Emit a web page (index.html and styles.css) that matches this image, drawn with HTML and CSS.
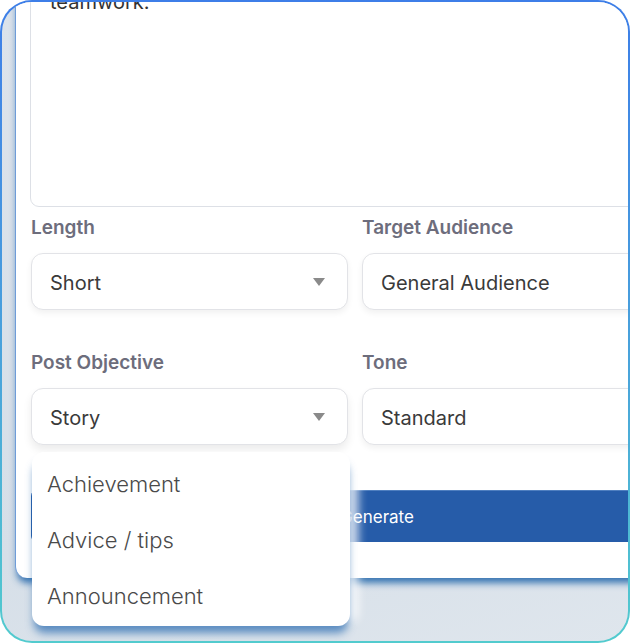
FILE: index.html
```html
<!DOCTYPE html>
<html lang="en">
<head>
    <meta charset="UTF-8">
    <meta name="viewport" content="width=device-width, initial-scale=1.0">
    <title>Post Generator</title>
    <link rel="stylesheet" href="styles.css">
</head>
<body>
    <div class="frame">
        <div class="screen">
            <div class="card">
                <div class="prompt">teamwork.</div>
                <div class="fields">
                    <div class="field">
                        <div class="label">Length</div>
                        <div class="select">Short<span class="caret"></span></div>
                    </div>
                    <div class="field">
                        <div class="label">Target Audience</div>
                        <div class="select">General Audience<span class="caret"></span></div>
                    </div>
                    <div class="field field-open">
                        <div class="label">Post Objective</div>
                        <div class="select">Story<span class="caret"></span></div>
                        <ul class="menu">
                            <li>Achievement</li>
                            <li>Advice / tips</li>
                            <li>Announcement</li>
                        </ul>
                    </div>
                    <div class="field">
                        <div class="label">Tone</div>
                        <div class="select">Standard<span class="caret"></span></div>
                    </div>
                </div>
                <button class="generate">Generate</button>
            </div>
        </div>
    </div>
</body>
</html>
```

FILE: styles.css
```css
*{
    padding: 0;
    margin: 0;
    box-sizing: border-box;
}
body{
    background: #fff;
    font-family: Inter, "Noto Sans", sans-serif;
}

/* rounded window with the blue to teal outline */
.frame{
    width: 630px;
    height: 643px;
    padding: 2px;
    border-radius: 32px;
    background: linear-gradient(180deg, #3d7ee8 0%, #4aa6da 60%, #52cbce 100%);
}
.screen{
    height: 100%;
    border-radius: 30px;
    overflow: hidden;
    background: linear-gradient(165deg, #dbe3eb 0%, #d6dfe8 70%, #dfe6ed 100%);
}

.card{
    width: 780px;
    margin-top: -101px;
    margin-left: 13px;
    padding: 14px 0 36px 15px;
    background: #fff;
    border-left: 1px solid #6f9cd8;
    border-bottom-left-radius: 12px;
    box-shadow: 0 7px 7px -2px rgba(38, 104, 172, 0.9);
}

/* textarea is scrolled, only its last line shows */
.prompt{
    height: 292px;
    margin-left: -1px;
    padding: 72px 19px 16px;
    border: 1px solid #dde0e6;
    border-radius: 9px;
    font-size: 20px;
    line-height: 28px;
    color: #333;
}

.fields{
    display: grid;
    grid-template-columns: 317px 361px;
    column-gap: 14px;
    row-gap: 40px;
    margin-top: 8px;
}
.field{
    position: relative;
}
.label{
    height: 24px;
    padding-top: 1px;
    margin-bottom: 14px;
    font-size: 19px;
    line-height: 24px;
    font-weight: 600;
    color: #6d6d7c;
}
.select{
    display: flex;
    align-items: center;
    justify-content: space-between;
    height: 57px;
    padding: 2px 22px 0 18px;
    border: 1px solid #e2e3e7;
    border-radius: 12px;
    background: #fff;
    font-size: 20px;
    color: #3a3a3a;
    box-shadow: 0 3px 6px rgba(0, 0, 0, 0.06);
}
.caret{
    width: 0;
    height: 0;
    margin-top: -2px;
    border-left: 6.5px solid transparent;
    border-right: 6.5px solid transparent;
    border-top: 8px solid #8a8a8a;
}
.field-open .select{
    box-shadow: 0 5px 9px rgba(0, 0, 0, 0.08);
}

/* open option list under Post Objective */
.menu{
    position: absolute;
    top: calc(100% + 7px);
    left: 1px;
    z-index: 2;
    width: 318px;
    padding: 4px 0 2px;
    list-style: none;
    background: #fff;
    border-radius: 12px;
    box-shadow: 0 9px 9px -2px rgba(45, 110, 178, 0.75), 12px 0 10px -4px rgba(255, 255, 255, 0.85);
}
.menu li{
    height: 56px;
    padding-left: 15px;
    font-size: 22px;
    line-height: 56px;
    font-weight: 300;
    color: #4a4a4a;
}

.generate{
    display: block;
    width: 692px;
    height: 52px;
    margin-top: 45px;
    border: none;
    border-top: 1px solid #4f7fc0;
    border-radius: 6px;
    background: #265ca9;
    color: #fff;
    font-family: Inter, "Noto Sans", sans-serif;
    font-size: 17px;
    text-align: center;
}
```
